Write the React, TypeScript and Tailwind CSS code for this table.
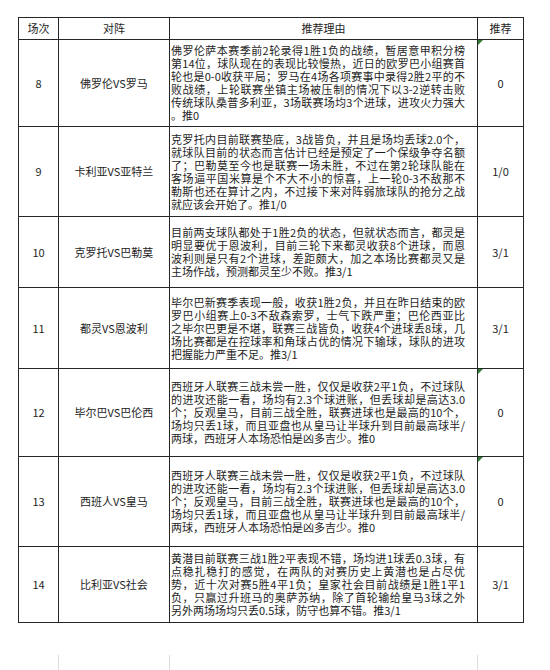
import React from 'react';

type Row = {
  no: string;
  match: string;
  reason: string[];
  pick: string;
  flag?: boolean;
  h: string;
};

const spainReason = [
  '西班牙人联赛三战未尝一胜，仅仅是收获2平1负，不过球队',
  '的进攻还能一看，场均有2.3个球进账，但丢球却是高达3.0',
  '个；反观皇马，目前三战全胜，联赛进球也是最高的10个，',
  '场均只丢1球，而且亚盘也从皇马让半球升到目前最高球半/',
  '两球，西班牙人本场恐怕是凶多吉少。推0',
];

const rows: Row[] = [
  {
    no: '8',
    match: '佛罗伦VS罗马',
    pick: '0',
    flag: true,
    h: 'h-[87px]',
    reason: [
      '佛罗伦萨本赛季前2轮录得1胜1负的战绩，暂居意甲积分榜',
      '第14位，球队现在的表现比较慢热，近日的欧罗巴小组赛首',
      '轮也是0-0收获平局；罗马在4场各项赛事中录得2胜2平的不',
      '败战绩，上轮联赛坐镇主场被压制的情况下以3-2逆转击败',
      '传统球队桑普多利亚，3场联赛场均3个进球，进攻火力强大',
      '。推0',
    ],
  },
  {
    no: '9',
    match: '卡利亚VS亚特兰',
    pick: '1/0',
    h: 'h-[90px]',
    reason: [
      '克罗托内目前联赛垫底，3战皆负，并且是场均丢球2.0个，',
      '就球队目前的状态而言估计已经是预定了一个保级争夺名额',
      '了；巴勒莫至今也是联赛一场未胜，不过在第2轮球队能在',
      '客场逼平国米算是个不大不小的惊喜，上一轮0-3不敌那不',
      '勒斯也还在算计之内，不过接下来对阵弱旅球队的抢分之战',
      '就应该会开始了。推1/0',
    ],
  },
  {
    no: '10',
    match: '克罗托VS巴勒莫',
    pick: '3/1',
    h: 'h-[71px]',
    reason: [
      '目前两支球队都处于1胜2负的状态，但就状态而言，都灵是',
      '明显要优于恩波利，目前三轮下来都灵收获8个进球，而恩',
      '波利则是只有2个进球，差距颇大，加之本场比赛都灵又是',
      '主场作战，预测都灵至少不败。推3/1',
    ],
  },
  {
    no: '11',
    match: '都灵VS恩波利',
    pick: '3/1',
    h: 'h-[81px]',
    reason: [
      '毕尔巴新赛季表现一般，收获1胜2负，并且在昨日结束的欧',
      '罗巴小组赛上0-3不敌森索罗，士气下跌严重；巴伦西亚比',
      '之毕尔巴更是不堪，联赛三战皆负，收获4个进球丢8球，几',
      '场比赛都是在控球率和角球占优的情况下输球，球队的进攻',
      '把握能力严重不足。推3/1',
    ],
  },
  { no: '12', match: '毕尔巴VS巴伦西', pick: '0', flag: true, h: 'h-[88px]', reason: spainReason },
  { no: '13', match: '西班人VS皇马', pick: '0', flag: true, h: 'h-[90px]', reason: spainReason },
  {
    no: '14',
    match: '比利亚VS社会',
    pick: '3/1',
    h: 'h-[76px]',
    reason: [
      '黄潜目前联赛三战1胜2平表现不错，场均进1球丢0.3球，有',
      '点稳扎稳打的感觉，在两队的对赛历史上黄潜也是占尽优',
      '势，近十次对赛5胜4平1负；皇家社会目前战绩是1胜1平1',
      '负，只赢过升班马的奥萨苏纳，除了首轮输给皇马3球之外',
      '另外两场场均只丢0.5球，防守也算不错。推3/1',
    ],
  },
];

const cell = 'border-r border-b border-[#262626] flex items-center justify-center';

export default function App() {
  return (
    <div className="w-[550px] h-[670px] overflow-hidden bg-white pt-[17px] pl-[18px] text-[#1e1e1e] font-['Noto_Sans_CJK_SC','Noto_Sans',sans-serif] text-[11px] leading-[13px]">
      <div className="w-[506px] border-l border-t border-[#262626]">
        <div className="grid grid-cols-[40px_111px_308px_46px] h-[22px]">
          <div className={cell}>场次</div>
          <div className={cell}>对阵</div>
          <div className={cell}>推荐理由</div>
          <div className={cell}>推荐</div>
        </div>

        {rows.map((r) => (
          <div key={r.no} className={`grid grid-cols-[40px_111px_308px_46px] ${r.h}`}>
            <div className={cell}>{r.no}</div>
            <div className={cell}>{r.match}</div>
            <div className="border-r border-b border-[#262626] flex flex-col justify-center pl-[1px]">
              {r.reason.map((line, i) => (
                <div
                  key={i}
                  className={`w-[294px] whitespace-nowrap ${
                    i < r.reason.length - 1 ? '[text-align-last:justify] text-justify' : ''
                  }`}
                >
                  {line}
                </div>
              ))}
            </div>
            <div className={`${cell} relative`}>
              {r.flag && (
                <span className="absolute left-0 top-0 w-0 h-0 border-t-[5px] border-r-[5px] border-t-[#2f7d32] border-r-transparent" />
              )}
              {r.pick}
            </div>
          </div>
        ))}
      </div>

      <div className="mt-[32px] ml-px grid grid-cols-[40px_111px_308px_46px] h-[20px]">
        <div className="border-r border-[#dcdcdc]" />
        <div className="border-r border-[#dcdcdc]" />
        <div className="border-r border-[#dcdcdc]" />
        <div />
      </div>
    </div>
  );
}
